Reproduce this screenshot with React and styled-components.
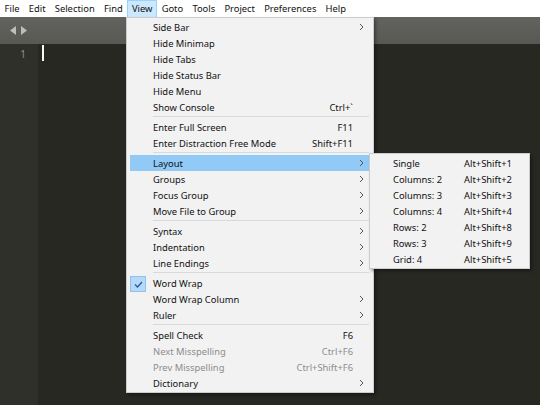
import React from "react";
import styled, { createGlobalStyle } from "styled-components";

const Global = createGlobalStyle`
  html, body { margin: 0; padding: 0; }
  body { width: 540px; height: 405px; overflow: hidden; background: #272822; }
  #root { width: 540px; height: 405px; }
`;

const Page = styled.div`
  position: relative;
  width: 540px;
  height: 405px;
  display: flex;
  flex-direction: column;
  font-family: "Noto Sans", "Open Sans", sans-serif;
  font-size: 9.4px;
  color: #111;
`;

const MenuBar = styled.div`
  height: 17px;
  background: #ffffff;
  display: flex;
  align-items: stretch;
`;

const BarItem = styled.div`
  display: flex;
  align-items: center;
  padding: 0 ${p => (p.$open ? 3.6 : 4.6)}px;
  box-sizing: border-box;
  background: ${p => (p.$open ? "#cce8ff" : "transparent")};
  border: ${p => (p.$open ? "1px solid #99d1ff" : "none")};
  border-bottom: none;
  line-height: 16px;
  font-size: 9.4px;
`;

const TabBar = styled.div`
  height: 27px;
  background: linear-gradient(#62625e, #585854);
  display: flex;
  align-items: center;
  padding-left: 10px;
  gap: 3px;
`;

const Arrow = styled.svg`
  width: 7px;
  height: 9px;
  display: block;
`;

const Editor = styled.div`
  flex: 1;
  display: flex;
  background: #272822;
`;

const Gutter = styled.div`
  width: 38px;
  background: #2f302a;
  box-sizing: border-box;
  padding-top: 2px;
  padding-right: 12px;
  text-align: right;
  color: #8f908a;
  font-size: 10px;
  line-height: 16px;
`;

const Code = styled.div`
  flex: 1;
  padding-top: 1px;
  padding-left: 4px;
`;

const Caret = styled.div`
  width: 2px;
  height: 16px;
  background: #f8f8f0;
`;

const Menu = styled.div`
  position: absolute;
  left: ${p => p.$left}px;
  top: ${p => p.$top}px;
  width: ${p => p.$width}px;
  box-sizing: border-box;
  background: #f2f2f2;
  border: 1px solid #cccccc;
  padding: 1px 0;
  box-shadow: 2px 2px 3px rgba(0, 0, 0, 0.35);
`;

const Row = styled.div`
  position: relative;
  height: 16px;
  margin: 0 4px 0 3px;
  display: grid;
  grid-template-columns: ${p => p.$cols};
  align-items: center;
  background: ${p => (p.$hl ? "#91c9f7" : "transparent")};
  color: ${p => (p.$disabled ? "#8d8d8d" : "#111")};
  white-space: nowrap;
`;

const Label = styled.span`
  padding-left: ${p => p.$indent ?? 23}px;
`;

const Shortcut = styled.span`
  text-align: ${p => p.$align || "right"};
`;

const Chevron = styled.svg`
  width: 5px;
  height: 8px;
  justify-self: center;
  display: block;
`;

const Separator = styled.div`
  height: 1px;
  margin: 1px 4px 2px 26px;
  background: #d9d9d9;
`;

const Check = styled.div`
  position: absolute;
  left: 0;
  top: 1px;
  width: 16px;
  height: 16px;
  box-sizing: border-box;
  background: #b5d9f6;
  border: 1px solid #8cc3ef;
  display: flex;
  align-items: center;
  justify-content: center;
`;

const ChevronIcon = () => (
  <Chevron viewBox="0 0 5 8">
    <path d="M1 1 L4 4 L1 7" fill="none" stroke="#555" strokeWidth="1" />
  </Chevron>
);

const mainCols = "1fr auto 16px";

const viewItems = [
  { l: "Side Bar", sub: true },
  { l: "Hide Minimap" },
  { l: "Hide Tabs" },
  { l: "Hide Status Bar" },
  { l: "Hide Menu" },
  { l: "Show Console", k: "Ctrl+`" },
  "sep",
  { l: "Enter Full Screen", k: "F11" },
  { l: "Enter Distraction Free Mode", k: "Shift+F11" },
  "sep",
  { l: "Layout", sub: true, hl: true },
  { l: "Groups", sub: true },
  { l: "Focus Group", sub: true },
  { l: "Move File to Group", sub: true },
  "sep",
  { l: "Syntax", sub: true },
  { l: "Indentation", sub: true },
  { l: "Line Endings", sub: true },
  "sep",
  { l: "Word Wrap", check: true },
  { l: "Word Wrap Column", sub: true },
  { l: "Ruler", sub: true },
  "sep",
  { l: "Spell Check", k: "F6" },
  { l: "Next Misspelling", k: "Ctrl+F6", dis: true },
  { l: "Prev Misspelling", k: "Ctrl+Shift+F6", dis: true },
  { l: "Dictionary", sub: true },
];

const layoutItems = [
  ["Single", "Alt+Shift+1"],
  ["Columns: 2", "Alt+Shift+2"],
  ["Columns: 3", "Alt+Shift+3"],
  ["Columns: 4", "Alt+Shift+4"],
  ["Rows: 2", "Alt+Shift+8"],
  ["Rows: 3", "Alt+Shift+9"],
  ["Grid: 4", "Alt+Shift+5"],
];

const bar = ["File", "Edit", "Selection", "Find", "View", "Goto", "Tools", "Project", "Preferences", "Help"];

export default function App() {
  return (
    <Page>
      <Global />
      <MenuBar>
        {bar.map(b => (
          <BarItem key={b} $open={b === "View"}>{b}</BarItem>
        ))}
      </MenuBar>
      <TabBar>
        <Arrow viewBox="0 0 7 9">
          <path d="M6 0 L0 4.5 L6 9 Z" fill="#bdbdb9" />
        </Arrow>
        <Arrow viewBox="0 0 7 9">
          <path d="M1 0 L7 4.5 L1 9 Z" fill="#bdbdb9" />
        </Arrow>
      </TabBar>
      <Editor>
        <Gutter>1</Gutter>
        <Code>
          <Caret />
        </Code>
      </Editor>

      <Menu $left={126} $top={17} $width={248}>
        {viewItems.map((it, i) =>
          it === "sep" ? (
            <Separator key={i} />
          ) : (
            <Row key={i} $cols={mainCols} $hl={it.hl} $disabled={it.dis}>
              {it.check && (
                <Check>
                  <svg width="9" height="7" viewBox="0 0 9 7">
                    <path d="M1 3.5 L3.5 6 L8 1" fill="none" stroke="#1f5da8" strokeWidth="1.3" />
                  </svg>
                </Check>
              )}
              <Label>{it.l}</Label>
              <Shortcut>{it.k || ""}</Shortcut>
              {it.sub ? <ChevronIcon /> : <span />}
            </Row>
          )
        )}
      </Menu>

      <Menu $left={369} $top={153} $width={161}>
        {layoutItems.map(([l, k]) => (
          <Row key={l} $cols="91px 1fr">
            <Label $indent={20}>{l}</Label>
            <Shortcut $align="left">{k}</Shortcut>
          </Row>
        ))}
      </Menu>
    </Page>
  );
}
